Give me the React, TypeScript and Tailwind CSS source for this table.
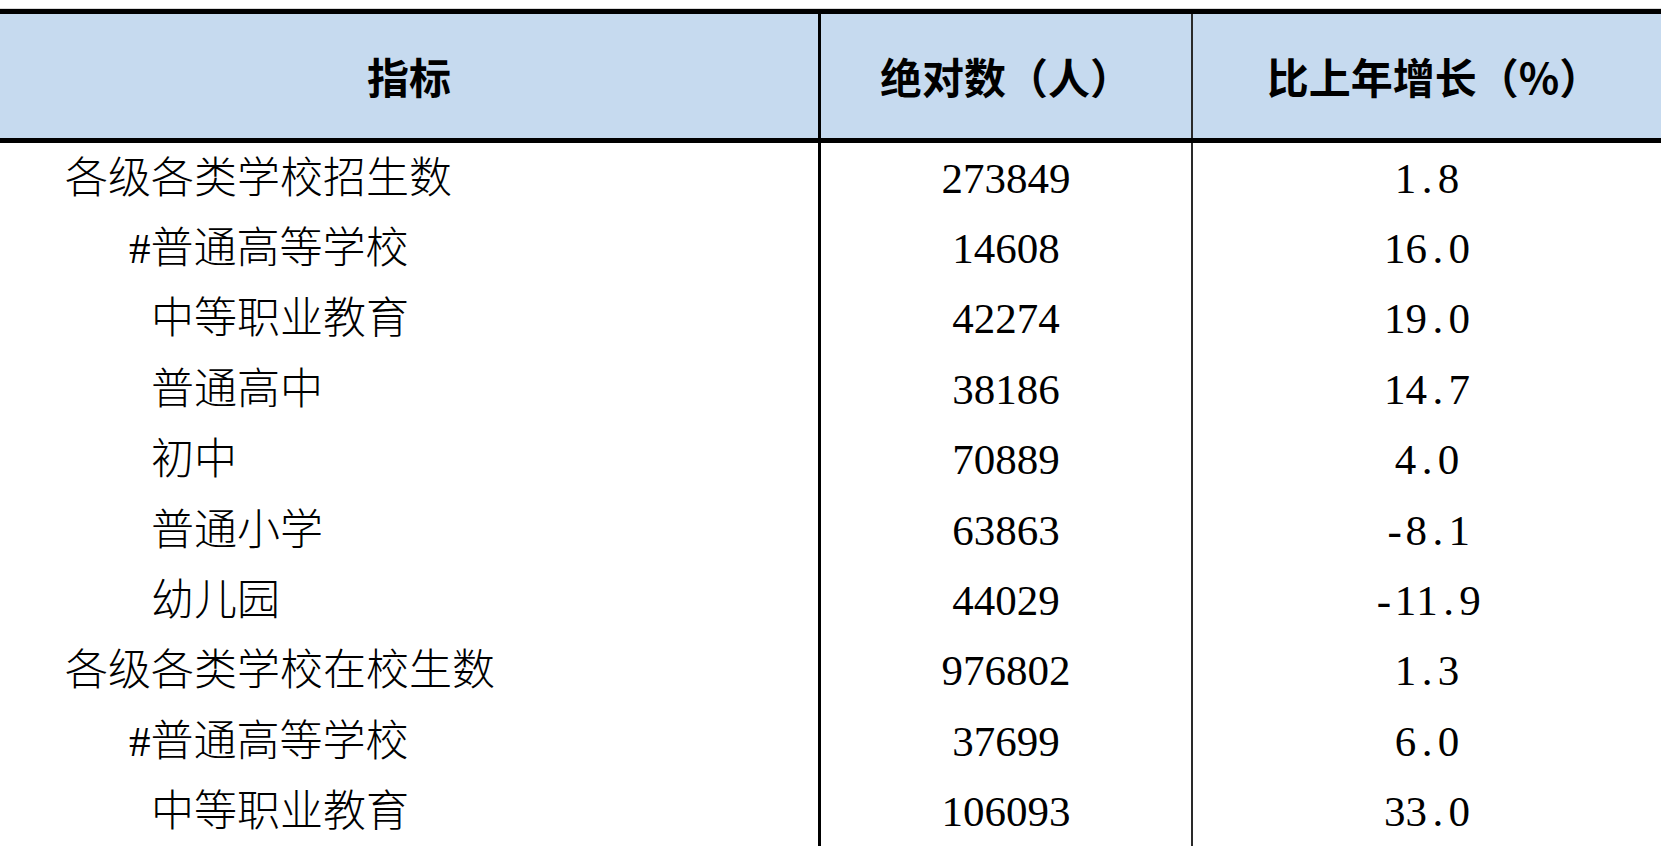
import React from "react";

type Row = {
    name: string;
    level: 0 | 1 | 2;
    total: string;
    growth: string;
};

const rows: Row[] = [
    { name: "各级各类学校招生数", level: 0, total: "273849", growth: "1.8" },
    { name: "#普通高等学校", level: 1, total: "14608", growth: "16.0" },
    { name: "中等职业教育", level: 2, total: "42274", growth: "19.0" },
    { name: "普通高中", level: 2, total: "38186", growth: "14.7" },
    { name: "初中", level: 2, total: "70889", growth: "4.0" },
    { name: "普通小学", level: 2, total: "63863", growth: "-8.1" },
    { name: "幼儿园", level: 2, total: "44029", growth: "-11.9" },
    { name: "各级各类学校在校生数", level: 0, total: "976802", growth: "1.3" },
    { name: "#普通高等学校", level: 1, total: "37699", growth: "6.0" },
    { name: "中等职业教育", level: 2, total: "106093", growth: "33.0" },
];

const indent = {
    0: "pl-[65px]",
    1: "pl-[129px]",
    2: "pl-[151px]",
};

// half-width cells so "1.8" spaces out like the original SimSun digits
function HalfWidth({ text }: { text: string }) {
    return (
        <span className="inline-flex">
            {text.split("").map((c, i) => (
                <span key={i} className="inline-block w-[0.5em] text-center">
                    {c}
                </span>
            ))}
        </span>
    );
}

export default function App() {
    return (
        <div className="h-[846px] overflow-hidden bg-white pt-[8px] text-black font-['Liberation_Serif','Noto_Sans_CJK_SC',serif]">
            <div className="border-t border-[#d9d9d9]">
                <div className="border-t-[5px] border-black">
                    {/* Header */}
                    <div className="flex h-[129px] border-b-[5px] border-black bg-[#c6daef] font-['Noto_Sans_CJK_SC',sans-serif] text-[42px] font-semibold leading-none">
                        <div className="flex w-[821px] items-center justify-center border-r-[3px] border-black">
                            指标
                        </div>
                        <div className="flex w-[372px] items-center justify-center border-r-[2px] border-[#2a2a2a]">
                            绝对数（人）
                        </div>
                        <div className="flex flex-1 items-center justify-center pl-[14px]">
                            比上年增长（%）
                        </div>
                    </div>

                    {/* Body */}
                    {rows.map((r, i) => (
                        <div key={i} className="flex h-[70.4px] text-[43px] font-light leading-none">
                            <div className={`flex w-[821px] items-center border-r-[3px] border-black ${indent[r.level]}`}>
                                {r.name}
                            </div>
                            <div className="flex w-[372px] items-center justify-center border-r-[2px] border-[#2a2a2a] font-normal">
                                <HalfWidth text={r.total} />
                            </div>
                            <div className="flex flex-1 items-center justify-center font-normal">
                                <HalfWidth text={r.growth} />
                            </div>
                        </div>
                    ))}
                </div>
            </div>
        </div>
    );
}
